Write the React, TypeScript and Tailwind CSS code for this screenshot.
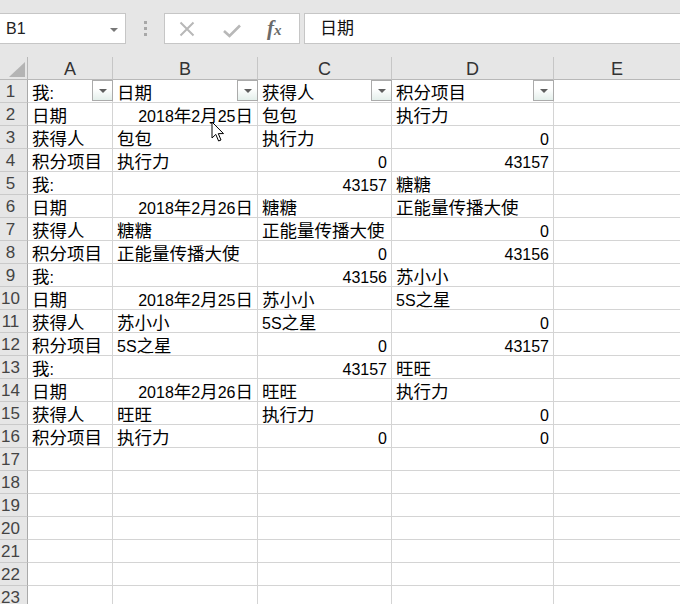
import { Fragment } from "react"

type Cell = string | { v: string; right: true }

const r = (v: string): Cell => ({ v, right: true })

const HEADERS = ["A", "B", "C", "D", "E"]

const ROWS: Cell[][] = [
  ["我:", "日期", "获得人", "积分项目"],
  ["日期", r("2018年2月25日"), "包包", "执行力"],
  ["获得人", "包包", "执行力", r("0")],
  ["积分项目", "执行力", r("0"), r("43157")],
  ["我:", "", r("43157"), "糖糖"],
  ["日期", r("2018年2月26日"), "糖糖", "正能量传播大使"],
  ["获得人", "糖糖", "正能量传播大使", r("0")],
  ["积分项目", "正能量传播大使", r("0"), r("43156")],
  ["我:", "", r("43156"), "苏小小"],
  ["日期", r("2018年2月25日"), "苏小小", "5S之星"],
  ["获得人", "苏小小", "5S之星", r("0")],
  ["积分项目", "5S之星", r("0"), r("43157")],
  ["我:", "", r("43157"), "旺旺"],
  ["日期", r("2018年2月26日"), "旺旺", "执行力"],
  ["获得人", "旺旺", "执行力", r("0")],
  ["积分项目", "执行力", r("0"), r("0")],
  [], [], [], [], [], [], [],
]

// CJK glyphs are drawn a bit larger than the latin digits, as in the sheet
function Txt({ s }: { s: string }) {
  const parts = s.split(/([\u3000-\u9fff]+)/)
  return (
    <>
      {parts.map((p, i) =>
        /[\u3000-\u9fff]/.test(p) ? (
          <span key={i} className="text-[17.5px] leading-[10px]">{p}</span>
        ) : (
          <Fragment key={i}>{p}</Fragment>
        )
      )}
    </>
  )
}

function FilterButton() {
  return (
    <div className="absolute right-[-1px] top-0 flex h-[21px] w-[21px] items-center justify-center border border-[#ababab] bg-gradient-to-b from-white from-40% to-[#e4efeb]">
      <div className="h-0 w-0 border-x-[4px] border-t-[4px] border-x-transparent border-t-[#5f5f5f]" />
    </div>
  )
}

function TopBar() {
  return (
    <div className="flex h-[57px] items-start bg-[#e6e6e6] pt-[13px]">
      <div className="relative flex h-[31px] w-[126px] items-center border border-l-0 border-[#c6c6c6] bg-white pl-[6px] text-[16px] text-[#222]">
        B1
        <div className="absolute right-[7px] top-[14px] h-0 w-0 border-x-[4px] border-t-[4px] border-x-transparent border-t-[#777]" />
      </div>
      <div className="flex h-[31px] w-[38px] flex-col items-center justify-center gap-[3px]">
        <div className="h-[3px] w-[3px] bg-[#a8a8a8]" />
        <div className="h-[3px] w-[3px] bg-[#a8a8a8]" />
        <div className="h-[3px] w-[3px] bg-[#a8a8a8]" />
      </div>
      <div className="flex h-[31px] w-[136px] items-center border border-[#c6c6c6] bg-white">
        <svg width="16" height="16" viewBox="0 0 16 16" className="ml-[14px]">
          <path d="M1.5 1.5 L14.5 14.5 M14.5 1.5 L1.5 14.5" stroke="#b8b8b8" strokeWidth="2" fill="none" />
        </svg>
        <svg width="18" height="14" viewBox="0 0 18 14" className="ml-[28px] mt-[4px]">
          <path d="M1 7 L6.5 12 L17 1.5" stroke="#b8b8b8" strokeWidth="2.6" fill="none" />
        </svg>
        <span className="ml-[26px] font-['Liberation_Serif',serif] text-[21px] font-bold italic leading-none text-[#6a6a6a]">
          f<span className="text-[15px]">x</span>
        </span>
      </div>
      <div className="ml-[4px] flex h-[31px] flex-1 items-center border border-r-0 border-[#c6c6c6] bg-white pl-[15px] text-[17px] text-[#111]">
        日期
      </div>
    </div>
  )
}

export default function App() {
  return (
    <div className="relative h-[604px] w-[680px] overflow-hidden bg-white font-['Liberation_Sans','Noto_Sans_CJK_SC',sans-serif]">
      <TopBar />
      <div className="grid grid-cols-[28px_85px_145px_134px_162px_1fr]">
        <div className="relative h-[23px] border-b border-r border-b-[#b8b8b8] border-r-[#b8b8b8] bg-[#e6e6e6]">
          <svg width="16" height="15" viewBox="0 0 16 15" className="absolute left-[9px] top-[5px]">
            <path d="M16 0 L16 15 L0 15 Z" fill="#b4b4b4" />
          </svg>
        </div>
        {HEADERS.map((h, i) => (
          <div
            key={h}
            className={`h-[23px] border-b border-b-[#b8b8b8] bg-[#e6e6e6] pt-[3px] text-center text-[18px] leading-[18px] text-[#333] ${
              i < HEADERS.length - 1 ? "border-r border-r-[#c6c6c6]" : ""
            }`}
          >
            {h}
          </div>
        ))}

        {ROWS.map((row, ri) => (
          <Fragment key={ri}>
            <div className="h-[23px] border-b border-r border-b-[#cacaca] border-r-[#a9a9a9] bg-[#e6e6e6] pr-[6px] pt-[3px] text-center text-[17px] leading-[18px] text-[#444]">
              {ri + 1}
            </div>
            {[0, 1, 2, 3, 4].map((ci) => {
              const c = row[ci] ?? ""
              const text = typeof c === "string" ? c : c.v
              const right = typeof c !== "string"
              return (
                <div
                  key={ci}
                  className={`relative h-[23px] whitespace-nowrap border-b border-[#d4d4d4] px-[4px] pt-[6px] text-[16px] leading-[16px] text-black ${
                    ci < 4 ? "border-r" : ""
                  } ${right ? "text-right" : "text-left"}`}
                >
                  <Txt s={text} />
                  {ri === 0 && ci < 4 && <FilterButton />}
                </div>
              )
            })}
          </Fragment>
        ))}
      </div>

      {/* mouse pointer */}
      <svg width="14" height="22" viewBox="0 0 14 22" className="absolute left-[211px] top-[121px]">
        <path d="M1 1 L1 17 L4.8 13.4 L7.6 20 L10 19 L7.3 12.6 L12.5 12.6 Z" fill="white" stroke="black" strokeWidth="1" strokeLinejoin="miter" />
      </svg>
    </div>
  )
}
